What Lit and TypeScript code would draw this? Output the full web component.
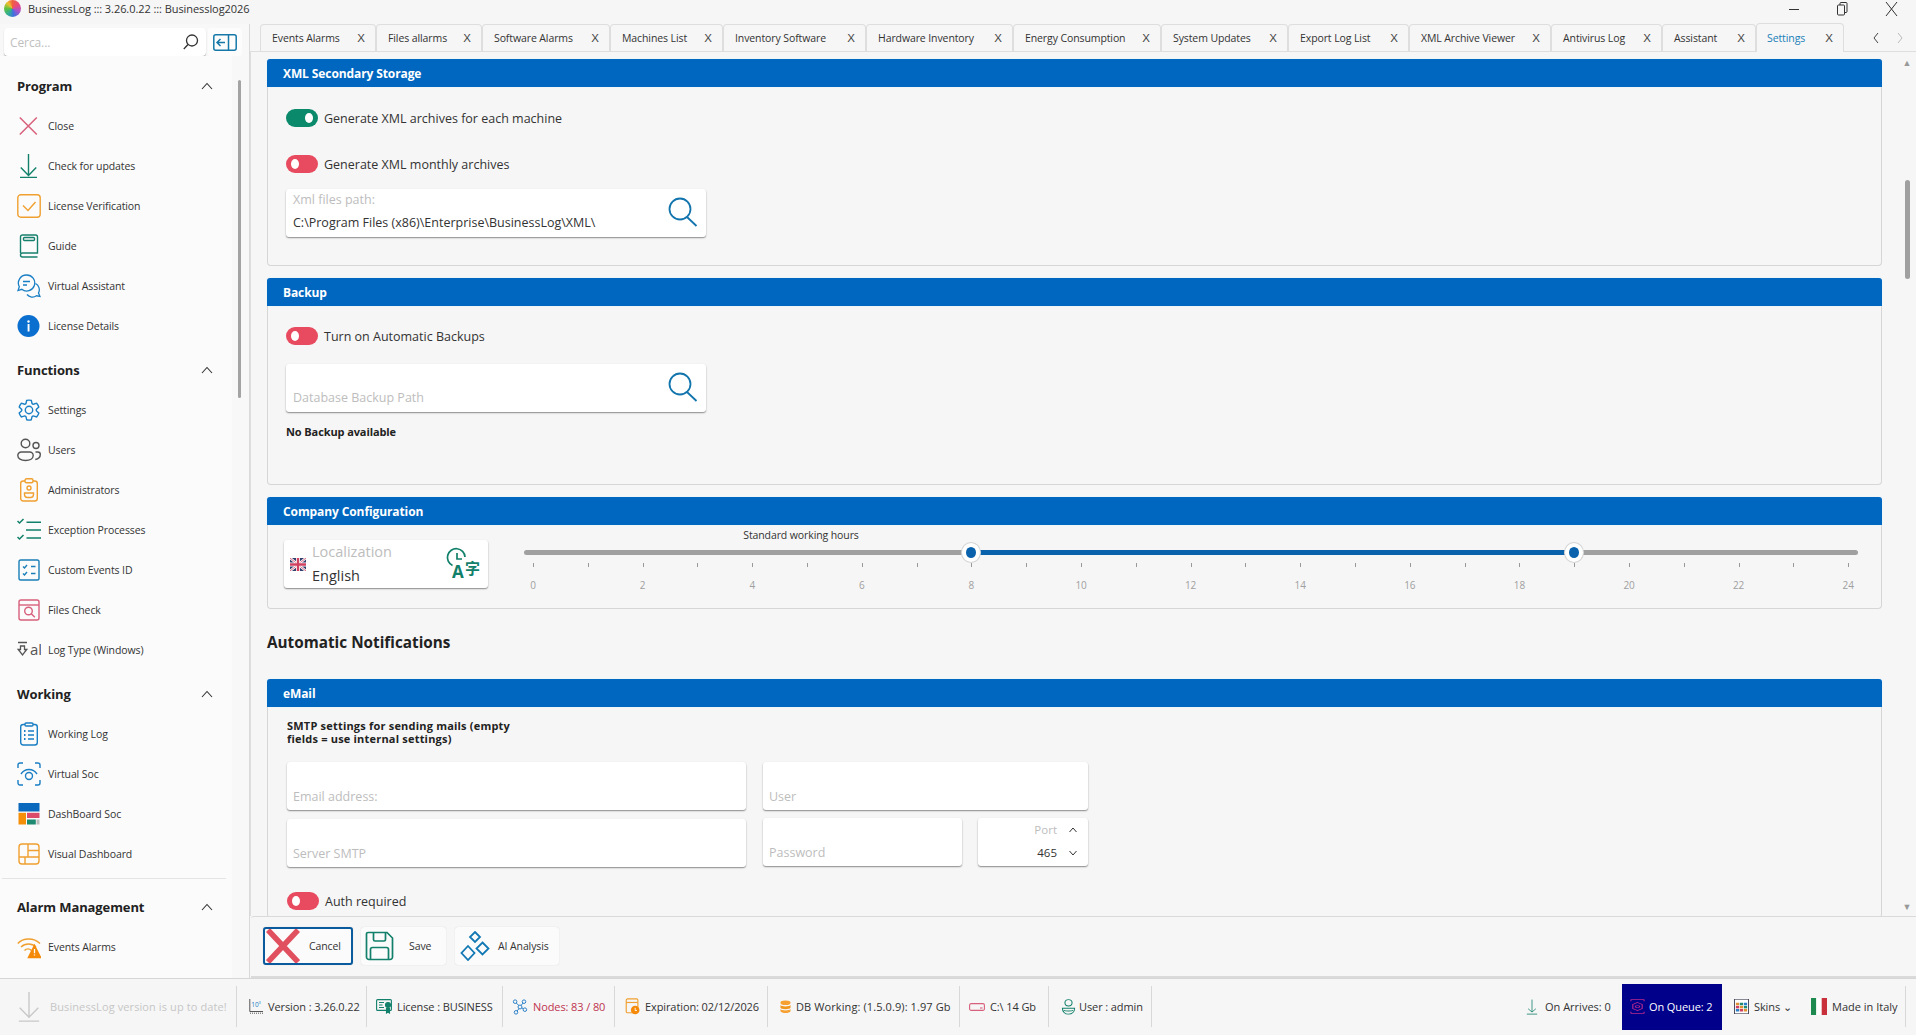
import { LitElement, html, css } from "lit";
import { customElement } from "lit/decorators.js";

const svgI = {
  close: html`<svg width="24" height="24" viewBox="0 0 24 24" fill="none" stroke="#d8607c" stroke-width="1.5"><path d="M2.8 3.5 19.800 20.500M19.800 3.500 2.800 20.500"/></svg>`,
  down: html`<svg width="24" height="24" viewBox="0 0 24 24" fill="none" stroke="#12806a" stroke-width="1.4"><path d="M11.5 0V21.5M3.8 13.5l7.7 8 7.7-8M3 23.4h17"/></svg>`,
  check: html`<svg width="24" height="24" viewBox="0 0 24 24" fill="none" stroke="#f0a030" stroke-width="1.4"><rect x=".8" y=".8" width="22.4" height="22.4" rx="3"/><path d="M6 11.5l5 5 7.5-8.5"/></svg>`,
  book: html`<svg width="24" height="24" viewBox="0 0 24 24" fill="none" stroke="#17806d" stroke-width="1.4"><path d="M3.5 19V3a2 2 0 0 1 2-2h13a2 2 0 0 1 2 2v16H5.500a2 2 0 0 0-2 2 2 2 0 0 0 2 2h15"/><rect x="6.500" y="3.500" width="11" height="3" rx="1"/></svg>`,
  chat: html`<svg width="24" height="24" viewBox="0 0 24 24" fill="none" stroke="#1a7fc4" stroke-width="1.3"><path d="M9.500 1a8 8 0 0 0-7.200 11.700L1 16.500l3.800-1.200A8 8 0 1 0 9.500 1z"/><path d="M6 7.500h7M6 11h4"/><path d="M18.500 9.500a7 7 0 0 1 3 9.500l1.500 3.500-3.500-.7a7 7 0 0 1-9.500-1.300"/></svg>`,
  info: html`<svg width="24" height="24" viewBox="0 0 24 24"><circle cx="11.500" cy="12" r="11" fill="#0a6fcf"/><rect x="10.600" y="10" width="1.900" height="7.500" fill="#fff"/><circle cx="11.500" cy="7.500" r="1.200" fill="#fff"/></svg>`,
  gear: html`<svg width="24" height="24" viewBox="0 0 24 24" fill="none" stroke="#1a7fc4" stroke-width="1.4"><path transform="translate(0 .6)" d="M12 1.500c.8 0 1.600.1 2.300.3l.6 2.600a1.500 1.500 0 0 0 2.200 1l2.500-.8c1 1.100 1.800 2.400 2.200 3.900l-2 1.800a1.500 1.500 0 0 0 0 2.400l2 1.800c-.4 1.500-1.200 2.800-2.200 3.900l-2.500-.8a1.500 1.500 0 0 0-2.200 1l-.6 2.600c-1.500.4-3.100.4-4.600 0l-.6-2.600a1.500 1.500 0 0 0-2.200-1l-2.500.8c-1-1.100-1.800-2.400-2.200-3.900l2-1.800a1.500 1.500 0 0 0 0-2.400l-2-1.800c.4-1.500 1.200-2.800 2.200-3.900l2.500.8a1.500 1.500 0 0 0 2.200-1l.6-2.600c.7-.2 1.500-.3 2.300-.3z"/><circle cx="12" cy="12" r="3.700"/></svg>`,
  users: html`<svg width="24" height="24" viewBox="0 0 24 24" fill="none" stroke="#555" stroke-width="1.4"><circle cx="8.500" cy="5.500" r="4.300"/><circle cx="19" cy="7.500" r="3"/><path d="M.8 17.500A3.500 3.500 0 0 1 4.300 14h8.400a3.500 3.500 0 0 1 3.500 3.500c0 3-3.200 5-7.700 5S.8 20.500.8 17.500z"/><path d="M18.500 14h2.300a2.500 2.500 0 0 1 2.500 2.500c0 2.500-2 4.500-5 5"/></svg>`,
  admin: html`<svg width="24" height="24" viewBox="0 0 24 24" fill="none" stroke="#f0a030" stroke-width="1.4"><rect x="3.700" y="3" width="16.600" height="20" rx="2.500"/><rect x="8" y=".7" width="8" height="4" rx="1.500" fill="#fafafa"/><circle cx="12" cy="10" r="2"/><path d="M7.500 15h9v1.500a3 3 0 0 1-3 3h-3a3 3 0 0 1-3-3z"/></svg>`,
  list: html`<svg width="24" height="24" viewBox="0 0 24 24" fill="none" stroke="#12806a" stroke-width="1.5"><path d="M9.500 4.300H24M9 12h15M9.500 20H24M.5 3l2 2 4-4M.5 19l2 2 4-4"/></svg>`,
  custom: html`<svg width="24" height="24" viewBox="0 0 24 24" fill="none" stroke="#1a7fb8" stroke-width="1.4"><rect x="2" y="2" width="20" height="20" rx="1.800"/><path d="M6 8.500l1.500 1.500 2.500-3M14 8.500h4.500M6 15.500l1.500 1.500 2.500-3M14 15.500h4.500"/></svg>`,
  filecheck: html`<svg width="24" height="24" viewBox="0 0 24 24" fill="none" stroke="#d8607c" stroke-width="1.4"><rect x="2" y="2" width="20" height="20" rx="2"/><path d="M2 7h20"/><circle cx="11.500" cy="13" r="3.800"/><path d="M14.300 15.800l3.500 3.500"/></svg>`,
  logtype: html`<svg width="24" height="24" viewBox="0 0 24 24" fill="none" stroke="#555" stroke-width="1.300"><path d="M1 4.500h9M3.500 8v3.500H1.200l4.300 5.500 4.300-5.500H7.500V8z"/><text x="13" y="17" font-size="15" stroke="none" fill="#555" font-family="Open Sans, sans-serif">al</text></svg>`,
  clip: html`<svg width="24" height="24" viewBox="0 0 24 24" fill="none" stroke="#1a7fc4" stroke-width="1.4"><rect x="3.700" y="2.500" width="16.600" height="20.500" rx="2.500"/><rect x="8" y="1" width="8" height="3" rx="1" fill="#fafafa"/><path d="M11 9h6M11 13h6M11 17h6"/><path d="M7 9h1.500M7 13h1.500M7 17h1.500" stroke-width="2"/></svg>`,
  scan: html`<svg width="24" height="24" viewBox="0 0 24 24" fill="none" stroke="#1a7fc4" stroke-width="1.4"><path d="M1 6V3a2 2 0 0 1 2-2h3M18 1h3a2 2 0 0 1 2 2v3M23 18v3a2 2 0 0 1-2 2h-3M6 23H3a2 2 0 0 1-2-2v-3"/><path d="M4 12c4-6 12-6 16 0"/><circle cx="12" cy="14" r="3.500"/></svg>`,
  dash: html`<svg width="24" height="24" viewBox="0 0 24 24"><rect x="1.500" y="1" width="21" height="8.500" fill="#0a68bd"/><rect x="1.500" y="10.800" width="7.500" height="11.700" fill="#f58f0a"/><rect x="10" y="10.800" width="12.500" height="5.200" fill="#dc4b6a"/><rect x="10" y="17.500" width="8.800" height="5" fill="#1e8a72"/><rect x="19.500" y="17.500" width="3" height="5" fill="#bdbdbd"/></svg>`,
  visual: html`<svg width="24" height="24" viewBox="0 0 24 24" fill="none" stroke="#f0a030" stroke-width="1.4"><rect x="2" y="2" width="20" height="20" rx="3"/><path d="M2 15h20M11 2v13M11 8.500h11M8 15v7"/></svg>`,
  wifi: html`<svg width="24" height="24" viewBox="0 0 24 24" fill="none" stroke="#f0a030" stroke-width="1.500"><path d="M.8 8.500C6 2.500 17 2.500 23 8.500M4 12c4-4 11-4 15 0M7.500 15.500c2-2 5-2 7 0"/><path d="M17.500 10.500l6 12h-12z" fill="#f58a0a" stroke="#f58a0a"/><path d="M17.500 14v4.200M17.500 19.400v1.200" stroke="#fff" stroke-width="1.300"/></svg>`,
  filealarm: html`<svg width="24" height="24" viewBox="0 0 24 24" fill="none" stroke="#555" stroke-width="1.400"><rect x="2" y="9" width="15" height="14" rx="5"/></svg>`,
  mag: html`<svg width="18" height="18" viewBox="0 0 18 18" fill="none" stroke="#333" stroke-width="1.300"><circle cx="10" cy="7.500" r="5.500"/><path d="M6 11.500 1.800 16"/></svg>`,
  panel: html`<svg width="24" height="17" viewBox="0 0 24 17" fill="none" stroke="#1578a8" stroke-width="1.500"><rect x=".8" y=".8" width="22.400" height="15.400" rx="2"/><path d="M15.500 1v15M12 8.500H4M7.500 5 4 8.500 7.500 12"/></svg>`,
  chev: html`<svg width="12" height="8" viewBox="0 0 12 8" fill="none" stroke="#333" stroke-width="1.100"><path d="M1 7l5-5.500L11 7"/></svg>`,
  search: html`<svg width="32" height="30" viewBox="0 0 32 30" fill="none" stroke="#1274ad" stroke-width="1.800"><circle cx="13" cy="12" r="10.500"/><path d="M20 20l9.500 9"/></svg>`,
  cancel: html`<svg width="34" height="34" viewBox="0 0 34 34" fill="none" stroke="#e0505f" stroke-width="5.500"><path d="M2 1l30 32M32 1 2 33"/></svg>`,
  save: html`<svg width="30" height="30" viewBox="0 0 30 30" fill="none" stroke="#12806a" stroke-width="1.700"><path d="M3 1.500h19l5.500 5.500v19a2.500 2.500 0 0 1-2.500 2.500H4A2.500 2.500 0 0 1 1.500 26V3A1.500 1.500 0 0 1 3 1.500z"/><path d="M8.500 1.500v7a1.500 1.500 0 0 0 1.500 1.500h9a1.500 1.500 0 0 0 1.500-1.500v-7M5.500 28.500V18.500a2 2 0 0 1 2-2h14a2 2 0 0 1 2 2v10"/></svg>`,
  ai: html`<svg width="30" height="30" viewBox="0 0 30 30" fill="none" stroke="#1278b4" stroke-width="1.800"><path d="M15 1l5 5-5 5-5-5zM22.500 11.500l6 6-6 6-6-6zM8 15l6.500 7-6.500 7-6.500-7z"/></svg>`,
  lang: html`<svg width="34" height="32" viewBox="0 0 34 32" fill="none" stroke="#12806a" stroke-width="1.700" overflow="visible"><path d="M4.500 17.500A8.800 8.800 0 1 1 17 9"/><path d="M9 5v6h5"/><text x="4" y="30" font-size="17" font-weight="700" fill="#12806a" stroke="none" font-family="Open Sans, sans-serif">A</text><text x="17" y="26" font-size="15" font-weight="700" fill="#12806a" stroke="none" font-family="Noto Sans CJK SC, sans-serif">字</text></svg>`,
  uk: html`<svg width="16" height="13" viewBox="0 0 16 13"><rect width="16" height="13" fill="#33406e"/><path d="M0 0l16 13M16 0 0 13" stroke="#fff" stroke-width="2.500"/><path d="M0 0l16 13M16 0 0 13" stroke="#d04060" stroke-width=".8"/><path d="M8 0v13M0 6.500h16" stroke="#fff" stroke-width="4"/><path d="M8 0v13M0 6.500h16" stroke="#d04060" stroke-width="2.400"/></svg>`,
  sDown: html`<svg width="22" height="30" viewBox="0 0 26 38" preserveAspectRatio="none" fill="none" stroke="#c8c8c8" stroke-width="1.600"><path d="M13 0v32M2 20l11 12 11-12M1 37h24"/></svg>`,
  sVer: html`<svg width="14" height="15" viewBox="0 0 14 15" fill="none" stroke="#444" stroke-width=".9"><path d="M.8 0v12.500H14"/><path d="M1 14.200h13" stroke-dasharray="1 1"/><text x="2.300" y="8" font-size="6.500" fill="#1a7fc4" stroke="none" font-family="Open Sans, sans-serif">10</text><text x="9.500" y="4.500" font-size="4" fill="#1a7fc4" stroke="none" font-family="Open Sans, sans-serif">3</text></svg>`,
  sLic: html`<svg width="16" height="15" viewBox="0 0 16 15" fill="none" stroke="#12806a" stroke-width="1.100"><rect x=".6" y=".6" width="14.800" height="10.800" rx="1"/><path d="M3 3.500h5M3 6h3.500M3 8.500h5"/><circle cx="12" cy="6" r="2.500" fill="#12806a"/><path d="M10.500 9v5l1.500-1 1.500 1V9" fill="#12806a"/></svg>`,
  sNodes: html`<svg width="16" height="16" viewBox="0 0 17 18" fill="none" stroke="#2a80c8" stroke-width="1.100"><circle cx="3" cy="3" r="2"/><circle cx="13" cy="3" r="2"/><circle cx="8.500" cy="9" r="2.200"/><circle cx="14" cy="12" r="2"/><circle cx="4" cy="15" r="2"/><path d="M4.200 4.600l3 2.600M11.800 4.600l-2 2.600M10.500 10l1.800 1M7.300 11l-2.200 2.500"/></svg>`,
  sExp: html`<svg width="15" height="17" viewBox="0 0 16 19" fill="none" stroke="#f0a030" stroke-width="1.300"><rect x="1" y="1" width="13" height="15.500" rx="1.500"/><path d="M1 5h13"/><circle cx="11" cy="13.500" r="4.800" fill="#f58a0a" stroke="none"/><path d="M11 11v3h2" stroke="#fff" stroke-width="1"/></svg>`,
  sDb: html`<svg width="11" height="14" viewBox="0 0 12 18" preserveAspectRatio="none"><ellipse cx="6" cy="3.500" rx="5.500" ry="3" fill="#f5a030"/><path d="M.5 6.500c1 2.500 10 2.500 11 0v3.500c-1 2.500-10 2.500-11 0z" fill="#f0951e"/><path d="M.5 11.500c1 2.500 10 2.500 11 0v3c-1 3-10 3-11 0z" fill="#f5a030"/></svg>`,
  sDrive: html`<svg width="16" height="8" viewBox="0 0 16 8" fill="none" stroke="#d8607c" stroke-width="1.100"><rect x=".6" y=".6" width="14.800" height="6.800" rx="1.500"/><path d="M11 5h2.500"/></svg>`,
  sUser: html`<svg width="15" height="16" viewBox="0 0 16 19" preserveAspectRatio="none" fill="none" stroke="#12806a" stroke-width="1.100"><circle cx="8" cy="4.500" r="3.800"/><path d="M1.500 11h13c0 4-2.500 7-6.500 7s-6.500-3-6.500-7z"/><path d="M3 13.500c1.500 1 8.500 1 10 0"/></svg>`,
  sArr: html`<svg width="12" height="16" viewBox="0 0 14 27" preserveAspectRatio="none" fill="none" stroke="#12806a" stroke-width="1.100"><path d="M7 1v21M2.500 16.500 7 22l4.500-5.500M1 25.500h12"/></svg>`,
  sQueue: html`<svg width="15" height="15" viewBox="0 0 16 26" preserveAspectRatio="none" fill="none" stroke="#b8288c" stroke-width="1.200"><path d="M1 1h14M1 25h14M1 1v3M15 1v3M1 25v-3M15 25v-3"/><path d="M8 6l5 3.500v7L8 20l-5-3.500v-7z"/><circle cx="8" cy="13" r="2.200"/></svg>`,
  sSkin: html`<svg width="15" height="15" viewBox="0 0 16 24" preserveAspectRatio="none"><rect x=".5" y=".5" width="15" height="23" fill="#fff" stroke="#445"/><rect x="2" y="6" width="3.500" height="4" fill="#e09030"/><rect x="6.200" y="6" width="3.500" height="4" fill="#1e8a72"/><rect x="10.500" y="6" width="3.500" height="4" fill="#2a80c8"/><rect x="2" y="11" width="3.500" height="4" fill="#d04060"/><rect x="6.200" y="11" width="3.500" height="4" fill="#e09030"/><rect x="10.500" y="11" width="3.500" height="4" fill="#1e8a72"/><rect x="2" y="16" width="3.500" height="4" fill="#2a80c8"/><rect x="6.200" y="16" width="3.500" height="4" fill="#d04060"/><rect x="10.500" y="16" width="3.500" height="4" fill="#e09030"/></svg>`,
  sIt: html`<svg width="16" height="17" viewBox="0 0 16 17"><rect width="5.300" height="17" fill="#1e8a50"/><rect x="5.300" width="5.400" height="17" fill="#fff"/><rect x="10.700" width="5.300" height="17" fill="#c8303c"/></svg>`,
};

const NAV = [
  { t: "Program", items: [["close", "Close"], ["down", "Check for updates"], ["check", "License Verification"], ["book", "Guide"], ["chat", "Virtual Assistant"], ["info", "License Details"]] },
  { t: "Functions", items: [["gear", "Settings"], ["users", "Users"], ["admin", "Administrators"], ["list", "Exception Processes"], ["custom", "Custom Events ID"], ["filecheck", "Files Check"], ["logtype", "Log Type (Windows)"]] },
  { t: "Working", items: [["clip", "Working Log"], ["scan", "Virtual Soc"], ["dash", "DashBoard Soc"], ["visual", "Visual Dashboard"]], rule: true },
  { t: "Alarm Management", items: [["wifi", "Events Alarms"], ["filealarm", ""]] },
];

const TABS: [string, number][] = [
  ["Events Alarms", 116], ["Files allarms", 106], ["Software Alarms", 128], ["Machines List", 113],
  ["Inventory Software", 143], ["Hardware Inventory", 147], ["Energy Consumption", 148], ["System Updates", 127],
  ["Export Log List", 121], ["XML Archive Viewer", 142], ["Antivirus Log", 111], ["Assistant", 94], ["Settings", 88],
];

const STATUS_L: any[] = [
  { w: 130, i: "sVer", t: "Version : 3.26.0.22" },
  { w: 136, i: "sLic", t: "License : BUSINESS", c: "p9" },
  { w: 112, i: "sNodes", t: "Nodes: 83 / 80", c: "red p9" },
  { w: 153, i: "sExp", t: "Expiration: 02/12/2026", c: "p10" },
  { w: 192, i: "sDb", t: "DB Working: (1.5.0.9): 1.97 Gb", c: "wide" },
  { w: 89, i: "sDrive", t: "C:\\ 14 Gb", c: "p9" },
  { w: 103, i: "sUser", t: "User : admin", c: "tight" },
];

@customElement("app-root")
export class AppRoot extends LitElement {
  static styles = css`
    :host { display: block; width: 100%; height: 100vh; overflow: hidden; }
    * { box-sizing: border-box; }
    svg { display: block; flex: none; }
    .app { height: 100%; display: flex; flex-direction: column; background: #f6f6f6; color: #333;
      font-family: "Open Sans", "Noto Sans", sans-serif; font-size: 11px; letter-spacing: -0.1px; }
    .title { flex: none; height: 24px; display: flex; align-items: flex-start; }
    .logo { width: 17px; height: 17px; margin-left: 4px; border-radius: 50%;
      background: conic-gradient(#f06040 0deg, #e84a80 60deg, #b050c8 110deg, #4070e0 170deg, #30b090 220deg, #60c040 270deg, #f0c030 320deg, #f06040 360deg); }
    .title-text { margin-left: 7px; line-height: 18px; font-size: 11px; color: #333; letter-spacing: -0.07px; }
    .win { margin-left: auto; display: flex; }
    .win span { width: 49px; height: 18px; display: flex; align-items: center; justify-content: center; }
    .main { flex: 1; min-height: 0; display: flex; }

    .side { flex: none; width: 250px; border-right: 1px solid #d9d9d9; display: flex; flex-direction: column; background: #f8f8f8; position: relative; }
    .search-row { flex: none; display: flex; gap: 2px; padding: 4px 0 0 4px; height: 32px; }
    .search { width: 202px; height: 28px; background: #fff; border-radius: 4px; box-shadow: 0 1px 1px #aaa;
      display: flex; align-items: center; justify-content: space-between; padding: 0 6px; color: #c0c0c0; font-size: 12px; }
    .toggle-side { width: 34px; height: 28px; background: #fcfcfc; border-radius: 3px; display: flex; align-items: center; justify-content: center; }
    .nav { flex: 1; min-height: 0; overflow: hidden; width: 232px; background: #fbfbfb; padding-top: 10px; }
    .group { margin-bottom: 4px; }
    .group-h { height: 40px; padding: 0 19px 0 17px; display: flex; align-items: center; justify-content: space-between; font-size: 13px; font-weight: 700; color: #222; }
    .item { height: 40px; padding-left: 17px; display: flex; align-items: center; gap: 7px; font-size: 10.5px; color: #333; }
    .rule { height: 1px; background: #e4e4e4; margin: 0 6px 8px 2px; }
    .sbar { position: absolute; left: 238px; top: 56px; width: 3px; height: 318px; background: #a3a3a3; border-radius: 2px; }

    .right { flex: 1; min-width: 0; display: flex; flex-direction: column; }
    .tabs { flex: none; height: 27px; display: flex; align-items: flex-end; padding-left: 10px; }
    .tab { height: 27px; flex: none; border: 1px solid #dedede; border-bottom: none; border-radius: 4px 4px 0 0; display: flex; align-items: center; justify-content: space-between;
      padding: 0 10px 0 11px; font-size: 10.5px; color: #333; }
    .tab.on { height: 29px; color: #1a7fb8; padding-left: 10px; background: #f6f6f6; margin-bottom: -1px; position: relative; }
    .x { font-family: "Liberation Sans", sans-serif; font-size: 11.5px; color: #444; letter-spacing: 0; }
    .tab-nav { display: flex; gap: 16px; padding: 0 0 0 28px; align-self: center; }
    .content { flex: 1; min-height: 0; display: flex; border-top: 1px solid #dedede; border-left: 1px solid #dedede; }
    .scroll { width: 1633px; flex: none; overflow: hidden; padding: 7px 0 0 16px; }
    .panel { width: 1615px; border: 1px solid #d6d6d6; border-top: none; border-radius: 4px; background: #f6f6f6; margin-bottom: 12px; }
    .ph { height: 28px; margin: 0 -1px; background: #0067c0; border-radius: 3px 3px 0 0; color: #fff; font-weight: 700; font-size: 12px; line-height: 29px; padding-left: 16px; box-shadow: 0 0 2px #dff3ff; }
    .pb { padding: 22px 0 0 18px; display: flex; flex-direction: column; align-items: flex-start; }
    .xml .pb { height: 178px; }
    .bak .pb { height: 178px; padding-top: 21px; }
    .co .pb { height: 83px; padding: 15px 0 0 16px; flex-direction: row; }
    .mail .pb { height: 210px; padding-top: 12px; }
    .mail { margin-bottom: 0; }
    .sw { display: flex; align-items: center; gap: 6px; font-size: 12.5px; height: 18px; color: #333; letter-spacing: 0; }
    .knob { width: 32px; height: 18px; border-radius: 9px; background: #e84a5f; position: relative; flex: none; }
    .knob::after { content: ""; position: absolute; left: 5px; top: 4px; width: 8px; height: 10px; border-radius: 50%; background: #fff; }
    .knob.on { background: #0b8a6b; }
    .knob.on::after { left: auto; right: 5px; }
    .gap-a { margin-top: 28px; }
    .field { background: #fff; border-radius: 3px; box-shadow: 0 1px 1.5px #8a8a8a; height: 48px; display: flex; position: relative; padding: 0 7px; color: #333; font-size: 12.5px; letter-spacing: 0; }
    .w420 { width: 420px; margin-top: 16px; }
    .bak .w420 { margin-top: 19px; }
    .fcol { display: flex; flex-direction: column; justify-content: flex-end; flex: 1; padding-bottom: 6px; gap: 7px; }
    .ph-t { color: #bdbdbd; line-height: 16px; }
    .fv { line-height: 16px; }
    .ficon { align-self: center; margin-right: 0; margin-top: -2px; }
    .note { font-weight: 700; font-size: 11px; color: #222; margin-top: 13px; line-height: 14px; }
    .loc { width: 204px; align-items: center; padding: 0 6px; gap: 6px; }
    .loc .a { color: #bdbdbd; font-size: 14.5px; line-height: 24px; }
    .loc .b { color: #333; font-size: 14.5px; line-height: 24px; }
    .loc .tx { flex: 1; }
    .slider { margin-left: 36px; width: 1334px; position: relative; }
    .s-title { width: 554px; text-align: center; font-size: 10.5px; line-height: 14px; margin-top: -12px; height: 14px; }
    .track { position: relative; height: 5px; background: #a0a0a0; border-radius: 3px; margin-top: 8px; }
    .fill { position: absolute; top: 0; height: 5px; background: #0a62ad; }
    .thumb { position: absolute; top: -8px; width: 20px; height: 21px; margin-left: -10px; border-radius: 50%; background: #fff; border: 1px solid #d4d4d4; }
    .thumb::after { content: ""; position: absolute; left: 4px; top: 4px; width: 10px; height: 11px; border-radius: 50%; background: #0a62ad; }
    .ticks { position: relative; height: 32px; margin-top: 8px; }
    .tick { position: absolute; top: 0; width: 1px; height: 4px; background: #999; }
    .lab { position: absolute; top: 15px; width: 30px; margin-left: -15px; text-align: center; font-size: 10px; line-height: 14px; color: #a0a0a0; }
    h2 { margin: 0 0 26px; padding-top: 10px; font-size: 15.3px; font-weight: 700; line-height: 22px; color: #222; letter-spacing: 0; }
    .smtp { width: 234px; margin-left: 1px; font-weight: 700; font-size: 11px; line-height: 13px; color: #222; letter-spacing: 0.2px; }
    .grid { margin-top: 17px; display: grid; grid-template-columns: 459px 17px 199px 16px 110px; grid-template-rows: 48px 48px; row-gap: 9px; margin-left: 1px; }
    .grid .field { padding: 0 6px; }
    .g1 { grid-column: 1; }
    .g2 { grid-column: 3 / 6; }
    .g3 { grid-column: 3; margin-top: -1px; }
    .g4 { grid-column: 5; margin-top: -1px; }
    .grid .fcol { padding-bottom: 5px; }
    .port { flex-direction: column; justify-content: space-between; padding: 4px 11px 5px 0 !important; font-size: 11.5px; }
    .port div { display: flex; justify-content: flex-end; align-items: center; gap: 12px; line-height: 16px; }
    .mail .sw { margin-top: 25px; margin-left: 1px; }
    .vbar { width: 16px; margin-left: auto; display: flex; flex-direction: column; align-items: center; color: #999; font-size: 9px; padding: 4px 2px 3px 0; }
    .thumbv { width: 5px; height: 99px; margin-top: 111px; background: #a0a0a0; border-radius: 3px; }
    .arrow-b { margin-top: auto; }
    .actions { flex: none; height: 62px; margin-left: 1px; border-top: 1px solid #dadada; border-bottom: 2px solid #dadada; display: flex; gap: 8px; padding: 10px 0 0 12px; background: #f6f6f6; border-radius: 3px 0 0 0; }
    .btn { height: 38px; background: #fbfbfb; border-radius: 3px; display: flex; align-items: center; font-size: 10.5px; color: #333; box-shadow: 0 0 1px #ccc; }
    .btn.c { width: 90px; border: 2px solid #0a5a9e; padding-left: 1px; gap: 9px; }
    .btn.s { width: 85px; padding-left: 4px; gap: 14px; }
    .btn.a { width: 104px; padding-left: 5px; gap: 8px; margin-left: 1px; }

    .status { flex: none; height: 57px; border-top: 1px solid #d6d6d6; display: flex; align-items: center; padding-bottom: 1px; background: #f6f6f6; font-size: 11px; }
    .cell { height: 41px; border-right: 1px solid #d8d8d8; display: flex; align-items: center; gap: 5px; padding-left: 12px; flex: none; white-space: nowrap; }
    .cell.msg { width: 237px; padding-left: 18px; gap: 10px; color: #c6c6c6; letter-spacing: 0.1px; }
    .cell.red { color: #c0344f; }
    .cell.p9 { padding-left: 9px; }
    .cell.p10 { padding-left: 10px; }
    .cell.wide { letter-spacing: 0.1px; }
    .cell.tight { gap: 3px; }
    .spacer { flex: 1; }
    .cell.r { border-right: none; padding-left: 0; letter-spacing: 0; }
    .cell.arr { width: 97px; gap: 7px; padding-left: 1px; }
    .queue { width: 100px; height: 46px; background: #00008b; color: #fff; display: flex; align-items: center; gap: 4px; padding-left: 8px; flex: none; }
    .cell.skins { width: 84px; padding-left: 12px; gap: 5px; letter-spacing: -0.1px; }
    .cell.italy { width: 100px; padding-left: 5px; border-right: 1px solid #d8d8d8; margin-right: 10px; }
  `;

  private field(cls: string, label: string, value = "", icon = false) {
    return html`<div class="field ${cls}"><div class="fcol"><span class="ph-t">${label}</span>${value ? html`<span class="fv">${value}</span>` : ""}</div>${icon ? html`<span class="ficon">${svgI.search}</span>` : ""}</div>`;
  }

  private slider() {
    const pos = (h: number) => 9 + h * 54.8;
    const ticks = Array.from({ length: 25 }, (_, i) => i);
    return html`<div class="slider">
      <div class="s-title">Standard working hours</div>
      <div class="track">
        <div class="fill" style="left:${pos(8)}px;width:${pos(19) - pos(8)}px"></div>
        <div class="thumb" style="left:${pos(8)}px"></div>
        <div class="thumb" style="left:${pos(19)}px"></div>
      </div>
      <div class="ticks">
        ${ticks.map((h) => html`<div class="tick" style="left:${pos(h)}px"></div>${h % 2 === 0 ? html`<div class="lab" style="left:${pos(h)}px">${h}</div>` : ""}`)}
      </div>
    </div>`;
  }

  render() {
    return html`<div class="app">
      <div class="title">
        <div class="logo"></div>
        <div class="title-text">BusinessLog ::: 3.26.0.22 ::: Businesslog2026</div>
        <div class="win">
          <span><svg width="10" height="10" viewBox="0 0 10 10" stroke="#333"><path d="M0 5.500h10"/></svg></span>
          <span><svg width="11" height="14" viewBox="0 0 11 14" fill="none" stroke="#333"><rect x=".5" y="3" width="7" height="10" rx="1"/><path d="M3 3V1.500A1 1 0 0 1 4 .5h5a1 1 0 0 1 1 1v8a1 1 0 0 1-1 1H8"/></svg></span>
          <span><svg width="13" height="16" viewBox="0 0 13 16" stroke="#333" stroke-width="1"><path d="M1 1l11 14M12 1 1 15"/></svg></span>
        </div>
      </div>
      <div class="main">
        <aside class="side">
          <div class="search-row">
            <div class="search"><span>Cerca...</span>${svgI.mag}</div>
            <div class="toggle-side">${svgI.panel}</div>
          </div>
          <div class="nav">
            ${NAV.map((g) => html`<section class="group">
              <div class="group-h"><span>${g.t}</span>${svgI.chev}</div>
              ${g.items.map(([ic, t]) => html`<div class="item">${(svgI as any)[ic]}${t ? html`<span>${t}</span>` : ""}</div>`)}
            </section>${g.rule ? html`<div class="rule"></div>` : ""}`)}
          </div>
          <div class="sbar"></div>
        </aside>
        <div class="right">
          <div class="tabs">
            ${TABS.map(([t, w]) => html`<div class="tab ${t === "Settings" ? "on" : ""}" style="width:${w}px"><span>${t}</span><span class="x">X</span></div>`)}
            <div class="tab-nav">
              <svg width="8" height="12" viewBox="0 0 8 12" fill="none" stroke="#444"><path d="M6 1 2 6l4 5"/></svg>
              <svg width="8" height="12" viewBox="0 0 8 12" fill="none" stroke="#bbb"><path d="M2 1l4 5-4 5"/></svg>
            </div>
          </div>
          <div class="content">
            <div class="scroll">
              <section class="panel xml">
                <div class="ph">XML Secondary Storage</div>
                <div class="pb">
                  <div class="sw"><span class="knob on"></span>Generate XML archives for each machine</div>
                  <div class="sw gap-a"><span class="knob"></span>Generate XML monthly archives</div>
                  ${this.field("w420", "Xml files path:", "C:\\Program Files (x86)\\Enterprise\\BusinessLog\\XML\\", true)}
                </div>
              </section>
              <section class="panel bak">
                <div class="ph">Backup</div>
                <div class="pb">
                  <div class="sw"><span class="knob"></span>Turn on Automatic Backups</div>
                  ${this.field("w420", "Database Backup Path", "", true)}
                  <div class="note">No Backup available</div>
                </div>
              </section>
              <section class="panel co">
                <div class="ph">Company Configuration</div>
                <div class="pb">
                  <div class="field loc">${svgI.uk}<div class="tx"><div class="a">Localization</div><div class="b">English</div></div>${svgI.lang}</div>
                  ${this.slider()}
                </div>
              </section>
              <h2>Automatic Notifications</h2>
              <section class="panel mail">
                <div class="ph">eMail</div>
                <div class="pb">
                  <div class="smtp">SMTP settings for sending mails (empty fields = use internal settings)</div>
                  <div class="grid">
                    ${this.field("g1", "Email address:")}
                    ${this.field("g2", "User")}
                    ${this.field("g1", "Server SMTP")}
                    ${this.field("g3", "Password")}
                    <div class="field g4 port">
                      <div><span class="ph-t">Port</span><svg width="8" height="6" viewBox="0 0 8 6" fill="none" stroke="#333"><path d="M.5 5 4 1l3.500 4"/></svg></div>
                      <div><span>465</span><svg width="8" height="6" viewBox="0 0 8 6" fill="none" stroke="#333"><path d="M.5 1 4 5l3.500-4"/></svg></div>
                    </div>
                  </div>
                  <div class="sw"><span class="knob"></span>Auth required</div>
                </div>
              </section>
            </div>
            <div class="vbar">
              <span>▲</span><div class="thumbv"></div><span class="arrow-b">▼</span>
            </div>
          </div>
          <div class="actions">
            <div class="btn c">${svgI.cancel}<span>Cancel</span></div>
            <div class="btn s">${svgI.save}<span>Save</span></div>
            <div class="btn a">${svgI.ai}<span>AI Analysis</span></div>
          </div>
        </div>
      </div>
      <footer class="status">
        <div class="cell msg">${svgI.sDown}<span>BusinessLog version is up to date!</span></div>
        ${STATUS_L.map((s) => html`<div class="cell ${s.c ?? ""}" style="width:${s.w}px">${(svgI as any)[s.i]}<span>${s.t}</span></div>`)}
        <div class="spacer"></div>
        <div class="cell r arr">${svgI.sArr}<span>On Arrives: 0</span></div>
        <div class="queue">${svgI.sQueue}<span>On Queue: 2</span></div>
        <div class="cell r skins">${svgI.sSkin}<span>Skins ⌄</span></div>
        <div class="cell r italy">${svgI.sIt}<span>Made in Italy</span></div>
      </footer>
    </div>`;
  }
}
